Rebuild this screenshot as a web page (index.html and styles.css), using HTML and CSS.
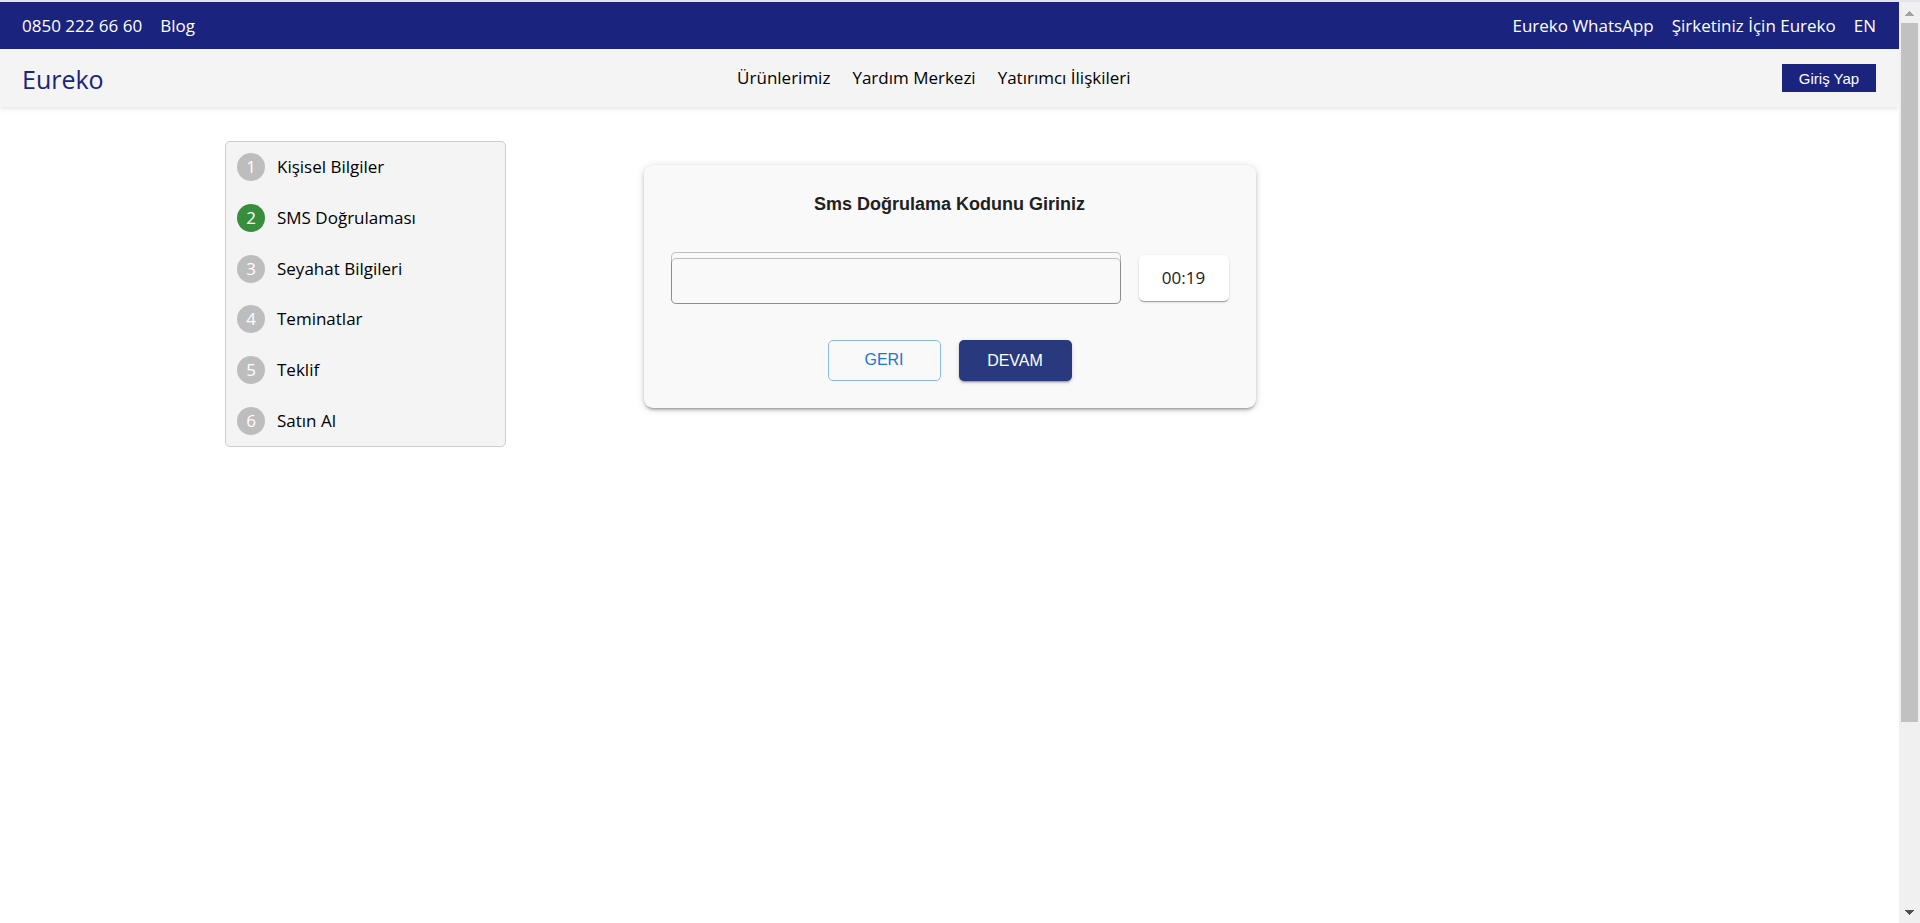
FILE: index.html
```html
<!DOCTYPE html>
<html lang="tr">
<head>
<meta charset="utf-8">
<title>Eureko</title>
<link rel="stylesheet" href="styles.css">
</head>
<body>
<div class="window">
  <div class="page">
    <div class="topbar">
      <nav class="topbar-links">
        <a href="#">0850 222 66 60</a>
        <a href="#">Blog</a>
      </nav>
      <nav class="topbar-links">
        <a href="#">Eureko WhatsApp</a>
        <a href="#">Şirketiniz İçin Eureko</a>
        <a href="#">EN</a>
      </nav>
    </div>
    <header class="header">
      <a class="brand" href="#">Eureko</a>
      <nav class="menu">
        <a href="#">Ürünlerimiz</a>
        <a href="#">Yardım Merkezi</a>
        <a href="#">Yatırımcı İlişkileri</a>
      </nav>
      <button class="login" type="button">Giriş Yap</button>
    </header>
    <main class="content">
      <ol class="steps">
        <li class="step"><span class="step-number">1</span>Kişisel Bilgiler</li>
        <li class="step"><span class="step-number step-active">2</span>SMS Doğrulaması</li>
        <li class="step"><span class="step-number">3</span>Seyahat Bilgileri</li>
        <li class="step"><span class="step-number">4</span>Teminatlar</li>
        <li class="step"><span class="step-number">5</span>Teklif</li>
        <li class="step"><span class="step-number">6</span>Satın Al</li>
      </ol>
      <form class="card">
        <h1 class="card-title" id="code-title">Sms Doğrulama Kodunu Giriniz</h1>
        <div class="code-row">
          <div class="code-field">
            <input class="code-input" type="text" aria-labelledby="code-title">
          </div>
          <div class="timer">00:19</div>
        </div>
        <div class="actions">
          <button class="button button-back" type="button">GERI</button>
          <button class="button button-next" type="button">DEVAM</button>
        </div>
      </form>
    </main>
  </div>
  <div class="scrollbar">
    <svg class="arrow" viewBox="0 0 9 5"><path d="M4 0h1v1h1v1h1v1h1v1h1v1H0V4h1V3h1V2h1V1h1z" fill="#a3a3a3"/></svg>
    <div class="track"><div class="thumb"></div></div>
    <svg class="arrow" viewBox="0 0 9 5"><path d="M0 0h9v1H8v1H7v1H6v1H5v1H4V4H3V3H2V2H1V1H0z" fill="#505050"/></svg>
  </div>
</div>
</body>
</html>
```

FILE: styles.css
```css
* { box-sizing: border-box; }

body {
  margin: 0;
  font-family: "Open Sans", "Noto Sans", sans-serif;
  font-size: 17px;
  line-height: 24px;
  color: #000;
  background: #fff;
}

a { color: inherit; text-decoration: none; }

.window {
  display: flex;
  min-height: 100vh;
  border-top: 2px solid #e3e5e8;
}

.page { flex: 1; min-width: 0; }

.topbar {
  display: flex;
  justify-content: space-between;
  align-items: center;
  height: 47px;
  padding: 0 23px 0 22px;
  color: #fff;
  background: #1a237e;
}

.topbar-links { display: flex; gap: 18px; }

.header {
  display: flex;
  justify-content: space-between;
  align-items: center;
  height: 58px;
  padding: 0 23px 0 22px;
  background: #f4f4f4;
  box-shadow: 0 2px 5px rgba(0, 0, 0, 0.1);
}

.brand { padding-top: 2px; font-size: 25px; line-height: 36px; color: #1a237e; }

.menu { display: flex; gap: 22px; padding-right: 18px; }

.login {
  width: 94px;
  height: 28px;
  padding: 0;
  border: 0;
  font: 15px "Liberation Sans", Arial, sans-serif;
  color: #fff;
  background: #1a237e;
}

.content {
  display: grid;
  grid-template-columns: 1fr 612px 1fr;
  align-items: start;
  padding: 34px 225px;
}

.steps {
  display: flex;
  flex-direction: column;
  justify-content: space-between;
  width: 281px;
  min-height: 306px;
  margin: 0;
  padding: 11px;
  list-style: none;
  border: 1px solid #ccc;
  border-radius: 5px;
  background: #f4f4f4;
}

.step { display: flex; align-items: center; gap: 12px; }

.step-number {
  width: 28px;
  height: 28px;
  border-radius: 50%;
  line-height: 28px;
  text-align: center;
  color: #fff;
  background: #bdbdbd;
}

.step-active { background: #388e3c; }

.card {
  margin-top: 24px;
  padding: 27px;
  border-radius: 9px;
  background: #f9f9f9;
  box-shadow: 0 3px 3px -2px rgba(0, 0, 0, 0.3), 0 2px 4px rgba(0, 0, 0, 0.14), 0 1px 8px rgba(0, 0, 0, 0.12);
}

.card-title {
  margin: 0 0 36px;
  font: bold 18px/24px "Liberation Sans", Arial, sans-serif;
  text-align: center;
  color: #212121;
}

.code-row { display: flex; align-items: center; gap: 18px; }

.code-field {
  display: flex;
  flex: 1;
  height: 52px;
  padding-top: 6px;
  border-radius: 5px;
  box-shadow: inset 0 0 0 1px rgba(0, 0, 0, 0.24);
}

.code-input {
  flex: 1;
  min-width: 0;
  padding: 0 14px;
  border: 1px solid rgba(0, 0, 0, 0.24);
  border-radius: 5px;
  font: inherit;
  background: transparent;
}

.timer {
  width: 90px;
  border-radius: 5px;
  line-height: 46px;
  text-align: center;
  color: #212121;
  background: #fff;
  box-shadow: 0 2px 1px -1px rgba(0, 0, 0, 0.2), 0 1px 1px rgba(0, 0, 0, 0.14), 0 1px 3px rgba(0, 0, 0, 0.12);
}

.actions {
  display: flex;
  justify-content: center;
  gap: 18px;
  margin-top: 36px;
}

.button {
  width: 113px;
  height: 41px;
  padding: 0;
  border: 0;
  border-radius: 5px;
  font: 16px "Liberation Sans", Arial, sans-serif;
}

.button-back {
  padding-bottom: 2px;
  border: 1px solid #8bbae8;
  color: #1976d2;
  background: transparent;
}

.button-next {
  color: #fff;
  background: #283a7d;
  box-shadow: 0 3px 1px -2px rgba(0, 0, 0, 0.2), 0 2px 2px rgba(0, 0, 0, 0.14), 0 1px 5px rgba(0, 0, 0, 0.12);
}

.scrollbar {
  display: flex;
  flex-direction: column;
  align-items: center;
  width: 21px;
  padding: 9px 2px 8px;
  background: #f0f0f0;
}

.arrow { width: 9px; height: 5px; }

.track { flex: 1; align-self: stretch; padding: 7px 0 13px; }

.thumb { width: 17px; height: 80%; background: #c1c1c1; }
```
